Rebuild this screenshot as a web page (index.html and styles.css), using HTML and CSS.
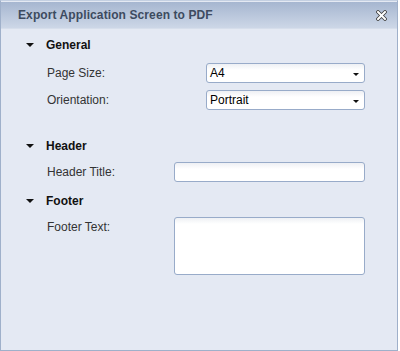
FILE: index.html
```html
<!DOCTYPE html>
<html lang="en">
<head>
    <meta charset="UTF-8">
    <title>Export Application Screen to PDF</title>
    <link rel="stylesheet" href="styles.css">
</head>
<body>
    <div class="window">
        <header class="titlebar">
            <span class="title">Export Application Screen to PDF</span>
            <svg class="close" width="11" height="11" viewBox="0 0 11 11">
                <path d="M2 2 L9 9 M9 2 L2 9" stroke="#3a3a3a" stroke-width="3.6" stroke-linecap="square"/>
                <path d="M2 2 L9 9 M9 2 L2 9" stroke="#fff" stroke-width="2" stroke-linecap="square"/>
            </svg>
        </header>

        <div class="content">
            <section class="group group-general">
                <div class="group-head"><span class="caret"></span>General</div>
                <div class="row">
                    <label>Page Size:</label>
                    <div class="select"><span>A4</span><span class="arrow"></span></div>
                </div>
                <div class="row">
                    <label>Orientation:</label>
                    <div class="select"><span>Portrait</span><span class="arrow"></span></div>
                </div>
            </section>

            <section class="group group-header">
                <div class="group-head"><span class="caret"></span>Header</div>
                <div class="row">
                    <label>Header Title:</label>
                    <div class="input"></div>
                </div>
            </section>

            <section class="group group-footer">
                <div class="group-head"><span class="caret"></span>Footer</div>
                <div class="row row-top">
                    <label>Footer Text:</label>
                    <div class="input textarea"></div>
                </div>
            </section>
        </div>
    </div>
</body>
</html>
```

FILE: styles.css
```css
body { margin: 0; font-family: 'Liberation Sans', Arial, sans-serif; font-size: 12px; background: #fff; }

.window {
    width: 398px;
    height: 351px;
    box-sizing: border-box;
    border: 1px solid #9fb0ca;
    border-top-color: #c4d0e2;
    background: #e4e9f3;
    display: flex;
    flex-direction: column;
}

.titlebar {
    height: 26px;
    margin-top: 1px;
    display: flex;
    align-items: center;
    justify-content: space-between;
    padding: 0 10px 0 17px;
    background: linear-gradient(#a6b6d0, #cdd7e7);
    border-bottom: 1px solid #d6deeb;
}
.titlebar .title { font-weight: bold; color: #3d4b60; font-size: 12px; letter-spacing: 0.1px; }
.titlebar .close { display: block; }

.content { padding-top: 6px; }

.group-head {
    height: 20px;
    display: flex;
    align-items: center;
    padding-left: 25px;
    font-weight: bold;
    color: #111;
}
.caret {
    width: 0;
    height: 0;
    border-left: 4px solid transparent;
    border-right: 4px solid transparent;
    border-top: 4px solid #111;
    margin-right: 12px;
}

.row {
    display: flex;
    align-items: center;
    padding-left: 46px;
    color: #333;
}
.row label { flex: none; }
.group-general .row label { width: 159px; }
.group-header .row label,
.group-footer .row label { width: 127px; }

.group-general .group-head { margin-bottom: 8px; }
.group-general .row + .row { margin-top: 7px; }
.group-header { margin-top: 26px; }
.group-header .group-head { margin-bottom: 6px; }
.group-footer { margin-top: 9px; }
.group-footer .group-head { margin-bottom: 6px; }
.row-top { align-items: flex-start; }
.row-top label { padding-top: 3px; }

.select, .input {
    box-sizing: border-box;
    height: 20px;
    width: 159px;
    border: 1px solid #98abc9;
    border-radius: 3px;
    background: linear-gradient(#eef0f4, #fff 6px);
}
.input { width: 191px; }
.textarea { height: 58px; }

.select {
    display: flex;
    align-items: center;
    justify-content: space-between;
    padding: 0 5px 0 3px;
    color: #000;
}
.arrow {
    width: 0;
    height: 0;
    border-left: 3px solid transparent;
    border-right: 3px solid transparent;
    border-top: 3px solid #111;
    margin-top: 2px;
}
```
